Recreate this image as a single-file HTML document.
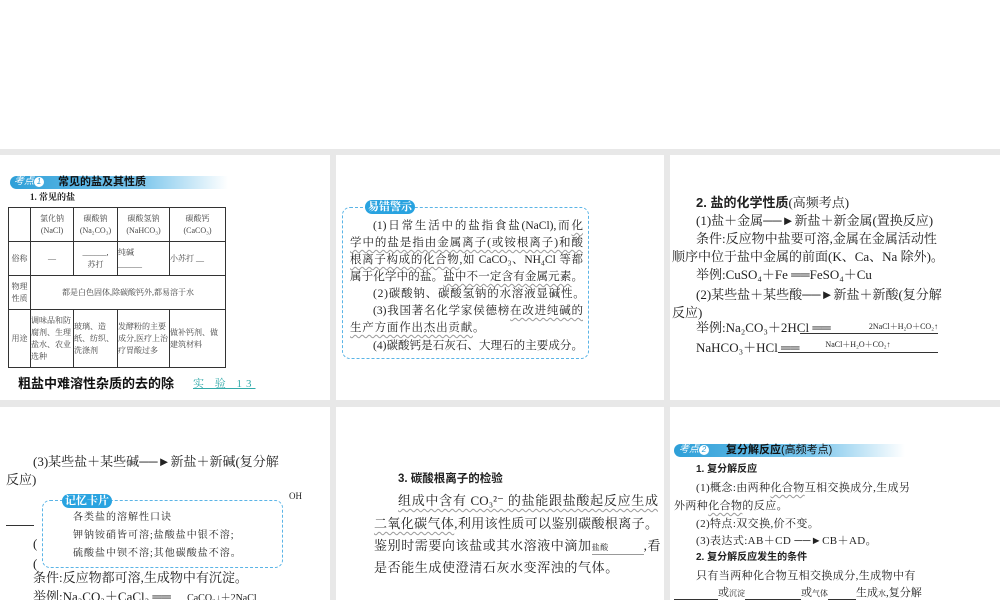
<!DOCTYPE html>
<html><head><meta charset="utf-8"><style>
*{margin:0;padding:0;box-sizing:border-box}
body{width:1000px;height:600px;background:#fff;position:relative;overflow:hidden;font-family:"Liberation Serif","Noto Serif CJK SC",serif;color:#222}
.gray{position:absolute;left:0;top:149px;width:1000px;height:451px;background:#e8e8e8}
.p{position:absolute;background:#fff;overflow:hidden}
.t{position:absolute;white-space:nowrap;line-height:1}
.j{position:absolute;white-space:nowrap;line-height:1;text-align:justify;text-align-last:justify}
.bar{position:absolute;height:13px;background:linear-gradient(90deg,#2d9fd8 0%,#7cc6ec 60%,#fff 100%);border-radius:7px 0 0 7px}
.lab{position:absolute;background:#29a3e0;color:#fff;border-radius:7px;font-size:11px;line-height:14px;text-align:center;font-weight:bold}
.dash{position:absolute;border:1.5px dashed #5ab4e6;border-radius:8px}
.wavy{text-decoration:underline wavy #999;text-underline-offset:3px;text-decoration-thickness:1px}
table{position:absolute;border-collapse:collapse;font-size:8px;color:#444}
td{border:1px solid #333;text-align:center;vertical-align:middle;line-height:1.5}
.b{font-weight:bold}
.s{font-family:"Liberation Sans","Noto Sans CJK SC",sans-serif}
</style></head><body>
<div class="gray"></div>

<div class="p" style="left:0;top:155px;width:330px;height:245px">
 <div class="bar" style="left:10px;top:21px;width:218px"></div>
 <div class="t s" style="left:14px;top:22px;font-size:10px;color:#fff;font-style:italic">考点<span style="display:inline-block;width:10px;height:10px;border-radius:5px;background:#fff;color:#2d9fd8;font-size:8px;text-align:center;line-height:10px">1</span></div>
 <div class="t s b" style="left:58px;top:22px;font-size:11px;color:#111">常见的盐及其性质</div>
 <div class="t b" style="left:30px;top:38px;font-size:9px">1. 常见的盐</div>
 <table style="left:8px;top:52px;width:218px;height:161px">
  <tr style="height:34px"><td style="width:22px"></td><td style="width:43px">氯化钠<br>(NaCl)</td><td style="width:44px">碳酸钠<br>(Na₂CO₃)</td><td style="width:52px">碳酸氢钠<br>(NaHCO₃)</td><td>碳酸钙<br>(CaCO₃)</td></tr>
  <tr style="height:34px"><td>俗称</td><td>—</td><td>______,<br>苏打</td><td style="text-align:left">纯碱<br>______</td><td style="text-align:left">小苏打 __</td></tr>
  <tr style="height:34px"><td>物理<br>性质</td><td colspan="4">都是白色固体,除碳酸钙外,都易溶于水</td></tr>
  <tr><td>用途</td><td style="text-align:left">调味品和防腐剂、生理盐水、农业选种</td><td style="text-align:left">玻璃、造纸、纺织、洗涤剂</td><td style="text-align:left">发酵粉的主要成分,医疗上治疗胃酸过多</td><td style="text-align:left">做补钙剂、做建筑材料</td></tr>
 </table>
 <div class="t s b" style="left:18px;top:222px;font-size:13px;color:#111">粗盐中难溶性杂质的去的除</div>
 <div class="t" style="left:193px;top:224px;font-size:11px;color:#3aa;letter-spacing:4px;text-decoration:underline">实 验 13</div>
</div>

<div class="p" style="left:336px;top:155px;width:328px;height:245px;font-size:11.5px">
 <div class="dash" style="left:6px;top:52px;width:247px;height:152px"></div>
 <div class="lab" style="left:29px;top:45px;width:50px">易错警示</div>
 <div class="j" style="left:37px;top:66px;width:210px">(1)日常生活中的盐指食盐(NaCl),而<span class="wavy">化</span></div>
 <div class="j" style="left:14px;top:83px;width:233px"><span class="wavy">学中的盐是指由金属离子(或铵根离子)和酸</span></div>
 <div class="j" style="left:14px;top:100px;width:233px"><span class="wavy">根离子构成的化合物</span>,如 CaCO₃、NH₄Cl 等都</div>
 <div class="j" style="left:14px;top:117px;width:233px">属于化学中的盐。<span class="wavy">盐中不一定含有金属元素</span>。</div>
 <div class="t" style="left:37px;top:134px;letter-spacing:0.8px">(2)碳酸钠、碳酸氢钠的水溶液显碱性。</div>
 <div class="j" style="left:37px;top:151px;width:210px">(3)我国著名化学家侯德榜<span class="wavy">在改进纯碱的</span></div>
 <div class="t" style="left:14px;top:168px;letter-spacing:0.8px"><span class="wavy">生产方面作出杰出贡献</span>。</div>
 <div class="j" style="left:37px;top:186px;width:210px">(4)碳酸钙是石灰石、大理石的主要成分。</div>
</div>

<div class="p" style="left:670px;top:155px;width:330px;height:245px;font-size:13px">
 <div class="t" style="left:26px;top:41px"><b class="s">2. 盐的化学性质</b>(高频考点)</div>
 <div class="t" style="left:26px;top:59px">(1)盐＋金属──►新盐＋新金属(置换反应)</div>
 <div class="t" style="left:26px;top:77px">条件:反应物中盐要可溶,金属在金属活动性</div>
 <div class="t" style="left:2px;top:95px">顺序中位于盐中金属的前面(K、Ca、Na 除外)。</div>
 <div class="t" style="left:26px;top:113px">举例:CuSO₄＋Fe ══FeSO₄＋Cu</div>
 <div class="t" style="left:26px;top:133px">(2)某些盐＋某些酸──►新盐＋新酸(复分解</div>
 <div class="t" style="left:2px;top:151px">反应)</div>
 <div class="t" style="left:26px;top:166px">举例:Na₂CO₃＋2HCl ══</div>
 <div class="t" style="left:130px;top:168px;width:138px;border-bottom:1px solid #333;font-size:8px;text-align:right;padding-bottom:2px">2NaCl＋H₂O＋CO₂↑</div>
 <div class="t" style="left:26px;top:186px">NaHCO₃＋HCl ══</div>
 <div class="t" style="left:108px;top:186px;width:160px;border-bottom:1px solid #333;font-size:8px;text-align:center;padding-bottom:3px">NaCl＋H₂O＋CO₂↑</div>
</div>

<div class="p" style="left:0;top:407px;width:330px;height:193px;font-size:13px">
 <div class="t" style="left:33px;top:48px">(3)某些盐＋某些碱──►新盐＋新碱(复分解</div>
 <div class="t" style="left:6px;top:66px">反应)</div>
 <div class="t" style="left:289px;top:85px;font-size:9px">OH</div>
 <div style="position:absolute;left:6px;top:118px;width:28px;border-top:1px solid #333"></div>
 <div class="t" style="left:33px;top:130px">(</div>
 <div class="t" style="left:33px;top:150px">(</div>
 <div class="dash" style="left:42px;top:93px;width:241px;height:68px"></div>
 <div class="lab" style="left:62px;top:87px;width:50px">记忆卡片</div>
 <div class="t" style="left:73px;top:106px;font-size:10px;letter-spacing:1px">各类盐的溶解性口诀</div>
 <div class="t" style="left:73px;top:124px;font-size:10px;letter-spacing:1px">钾钠铵硝皆可溶;盐酸盐中银不溶;</div>
 <div class="t" style="left:73px;top:142px;font-size:10px;letter-spacing:1px">硫酸盐中钡不溶;其他碳酸盐不溶。</div>
 <div class="t" style="left:33px;top:164px">条件:反应物都可溶,生成物中有沉淀。</div>
 <div class="t" style="left:33px;top:183px">举例:Na₂CO₃＋CaCl₂ ══　 <span style="font-size:10px">CaCO₃↓＋2NaCl</span></div>
</div>

<div class="p" style="left:336px;top:407px;width:328px;height:193px;font-size:13px">
 <div class="t s b" style="left:62px;top:67px;font-size:11.5px">3. 碳酸根离子的检验</div>
 <div class="j" style="left:62px;top:87px;width:260px"><span class="wavy">组成中含有 CO₃²⁻ 的盐能跟盐酸起反应生成</span></div>
 <div class="j" style="left:38px;top:110px;width:284px"><span class="wavy">二氧化碳气体</span>,利用该性质可以鉴别碳酸根离子。</div>
 <div class="t" style="left:38px;top:132px;letter-spacing:0.6px">鉴别时需要向该盐或其水溶液中滴加<span style="display:inline-block;width:52px;border-bottom:1px solid #999;font-size:8px;line-height:12px">盐酸</span>,看</div>
 <div class="t" style="left:38px;top:154px;letter-spacing:0.6px">是否能生成使澄清石灰水变浑浊的气体。</div>
</div>

<div class="p" style="left:670px;top:407px;width:330px;height:193px;font-size:11px">
 <div class="bar" style="left:4px;top:37px;width:231px"></div>
 <div class="t s" style="left:9px;top:38px;font-size:10px;color:#fff;font-style:italic">考点<span style="display:inline-block;width:10px;height:10px;border-radius:5px;background:#fff;color:#2d9fd8;font-size:8px;text-align:center;line-height:10px">2</span></div>
 <div class="t s b" style="left:56px;top:38px;font-size:11px;color:#111">复分解反应<span style="font-weight:normal">(高频考点)</span></div>
 <div class="t s b" style="left:26px;top:58px;font-size:10px">1. 复分解反应</div>
 <div class="t" style="left:26px;top:76px;letter-spacing:0.4px">(1)概念:由两种<span class="wavy">化合物</span>互相交换成分,生成另</div>
 <div class="t" style="left:4px;top:94px;letter-spacing:0.4px">外两种<span class="wavy">化合物</span>的反应。</div>
 <div class="t" style="left:26px;top:112px;letter-spacing:0.4px">(2)特点:双交换,价不变。</div>
 <div class="t" style="left:26px;top:129px;letter-spacing:0.4px">(3)表达式:AB＋CD ──►CB＋AD。</div>
 <div class="t s b" style="left:26px;top:146px;font-size:10px">2. 复分解反应发生的条件</div>
 <div class="t" style="left:26px;top:164px;letter-spacing:0.4px">只有当两种化合物互相交换成分,生成物中有</div>
 <div class="t" style="left:4px;top:181px"><span style="display:inline-block;width:44px;border-bottom:1px solid #333">&nbsp;</span>或<span style="font-size:8px">沉淀</span><span style="display:inline-block;width:56px;border-bottom:1px solid #333">&nbsp;</span>或<span style="font-size:8px">气体</span><span style="display:inline-block;width:28px;border-bottom:1px solid #333">&nbsp;</span>生成<span style="font-size:8px">水</span>,复分解</div>
</div>
</body></html>
